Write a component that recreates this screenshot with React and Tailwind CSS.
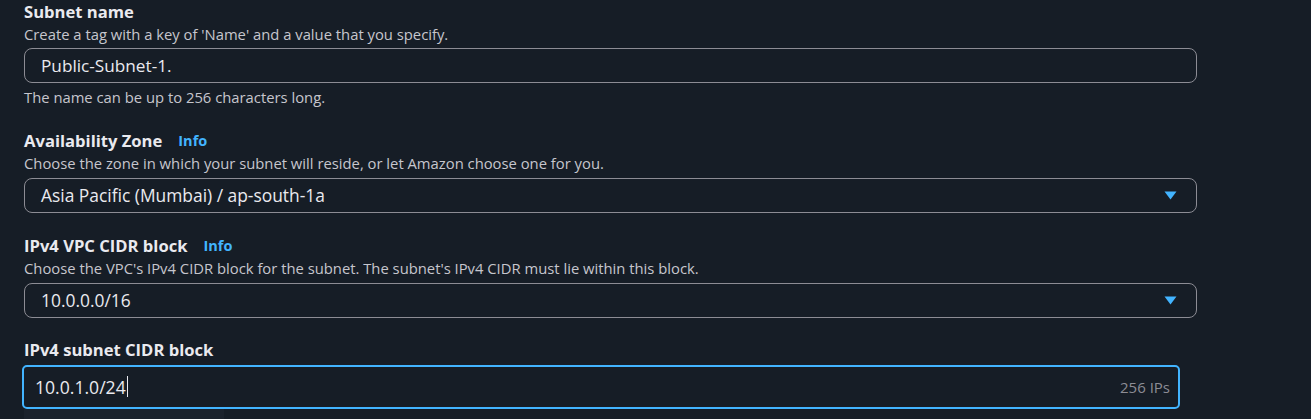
import React from 'react'

const font = { fontFamily: '"Open Sans", "Noto Sans", Arial, sans-serif' }

function Label({ children, info }) {
  return (
    <div className="flex items-center gap-4 h-5">
      <span className="text-[16.6px] font-bold text-[#eaeaef] leading-5">{children}</span>
      {info && <span className="text-[14.5px] font-bold text-[#42b4ff] leading-5">Info</span>}
    </div>
  )
}

function Description({ children }) {
  return <div className="text-[14.8px] leading-[22px] text-[#c6c6cd] mt-[1px]">{children}</div>
}

function Caret() {
  return (
    <svg width="13" height="9" viewBox="0 0 13 9" className="shrink-0">
      <path d="M0.5 0.5 H12.5 L6.5 8.5 Z" fill="#42b4ff" />
    </svg>
  )
}

function Select({ value }) {
  return (
    <div className="mt-[4px] h-[35px] w-[1173px] rounded-lg border border-[#8c8c94] bg-[#161d26] flex items-center justify-between pl-4 pr-[19px]">
      <span className="text-[17.4px] text-[#eaeaef]">{value}</span>
      <Caret />
    </div>
  )
}

export default function App() {
  return (
    <div className="min-h-screen bg-[#161d26] overflow-hidden" style={font}>
      <div className="pl-6 pt-[2px]">
        {/* Subnet name */}
        <div>
          <Label>Subnet name</Label>
          <Description>Create a tag with a key of 'Name' and a value that you specify.</Description>
          <div className="mt-[3px] h-[35px] w-[1173px] rounded-lg border border-[#8c8c94] bg-[#161d26] flex items-center pl-4">
            <span className="text-[17.2px] text-[#eaeaef]">Public-Subnet-1.</span>
          </div>
          <div className="mt-[4px] text-[14.8px] leading-5 text-[#c6c6cd]">The name can be up to 256 characters long.</div>
        </div>

        {/* Availability Zone */}
        <div className="mt-[24px]">
          <Label info>Availability Zone</Label>
          <Description>Choose the zone in which your subnet will reside, or let Amazon choose one for you.</Description>
          <Select value="Asia Pacific (Mumbai) / ap-south-1a" />
        </div>

        {/* IPv4 VPC CIDR block */}
        <div className="mt-[23px]">
          <Label info>IPv4 VPC CIDR block</Label>
          <Description>Choose the VPC's IPv4 CIDR block for the subnet. The subnet's IPv4 CIDR must lie within this block.</Description>
          <Select value="10.0.0.0/16" />
        </div>

        {/* IPv4 subnet CIDR block */}
        <div className="mt-[22px]">
          <Label>IPv4 subnet CIDR block</Label>
          <div className="mt-[5px] -ml-[2px] h-[44px] w-[1158px] rounded-[5px] border-2 border-[#42b4ff] bg-[#161d26] flex items-center justify-between pl-[11px] pr-[8px]">
            <span className="flex items-center text-[17.6px] text-[#eaeaef]">
              10.0.1.0/24
              <span className="ml-[1px] inline-block w-px h-[21px] bg-[#eaeaef]" />
            </span>
            <span className="text-[15px] text-[#8c8c94]">256 IPs</span>
          </div>
          <div className="w-[200px] h-[20px] bg-[#1b222c]" />
        </div>
      </div>
    </div>
  )
}
